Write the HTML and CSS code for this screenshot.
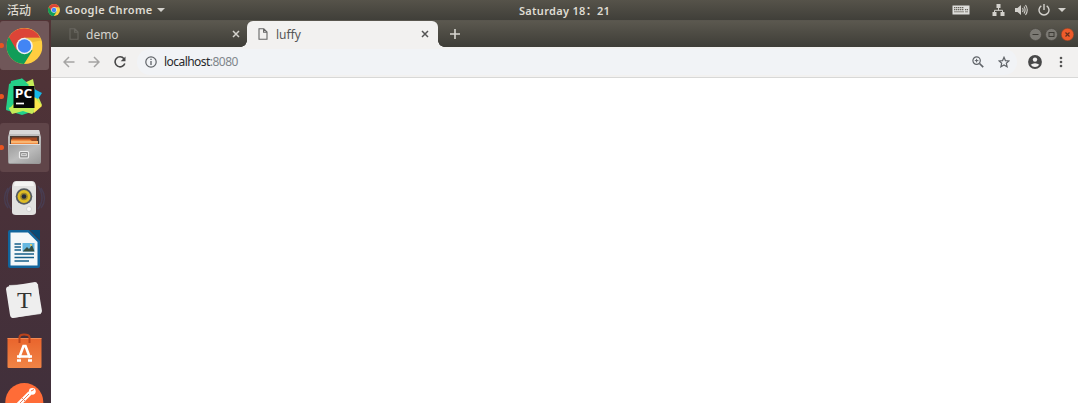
FILE: index.html
```html
<!DOCTYPE html>
<html lang="zh">
<head>
<meta charset="utf-8">
<title>luffy</title>
<link rel="stylesheet" href="styles.css">
</head>
<body>
<svg width="0" height="0" class="defs">
  <defs>
    <symbol id="chrome" viewBox="0 0 36 36">
      <circle cx="18" cy="18" r="18" fill="#ffcd40"/>
      <path d="M18 18 2.4 9A18 18 0 0 0 17.5 36L26 22.5Z" fill="#109d58"/>
      <path d="M2.4 9A18 18 0 0 1 33.6 9.8H18L10 22Z" fill="#dc4437"/>
      <circle cx="18" cy="18" r="8.3" fill="#f1f1f1"/>
      <circle cx="18" cy="18" r="6.7" fill="#4285f4"/>
    </symbol>
    <symbol id="page" viewBox="0 0 10 12">
      <path d="M1 .8H5.8L9 4V11.2H1ZM5.6 1V4.3H9" fill="none" stroke="currentColor" stroke-width="1.1"/>
    </symbol>
    <symbol id="close" viewBox="0 0 8 8">
      <path d="M1 1 7 7M7 1 1 7" stroke="currentColor" stroke-width="1.5"/>
    </symbol>
    <linearGradient id="steel" x1="0" y1="0" x2="0" y2="1"><stop offset="0" stop-color="#c4c4c4"/><stop offset="1" stop-color="#999"/></linearGradient>
    <linearGradient id="front" x1="0" y1="0" x2="1" y2="1"><stop offset="0" stop-color="#9c9c9c"/><stop offset=".5" stop-color="#bcbcbc"/><stop offset="1" stop-color="#9a9a9a"/></linearGradient>
    <linearGradient id="bag" x1="0" y1="0" x2="0" y2="1"><stop offset="0" stop-color="#e9642c"/><stop offset="1" stop-color="#f08446"/></linearGradient>
  </defs>
</svg>

<header class="topbar">
  <span class="activities">活动</span>
  <svg class="app-icon" width="12" height="12"><use href="#chrome"/></svg>
  <span class="app-name">Google Chrome</span>
  <svg class="caret" width="8" height="4"><path d="M0 0H8L4 4Z" fill="#d3d1cc"/></svg>
  <span class="clock">Saturday 18<span class="colon">：</span>21</span>
  <div class="tray">
    <svg class="keyboard" width="18" height="10" viewBox="0 0 18 10"><rect x=".5" y=".5" width="17" height="9" fill="#dededb"/><path d="M2 2.7H12M2 4.7H12M13 4.7H16" stroke="#66635c" stroke-width="1.2" stroke-dasharray="1.4 .6"/><path d="M2 6.8H12M13 6.8H16" stroke="#85827b"/></svg>
    <svg class="network" width="13" height="12" viewBox="0 0 13 12"><path d="M4.5 0H8.5V4H4.5ZM.5 8H4.5V12H.5ZM8.5 8H12.5V12H8.5Z" fill="#d3d1cc"/><path d="M6.5 4V6.3M2.5 8V6.3H10.500V8" fill="none" stroke="#d3d1cc"/></svg>
    <svg class="volume" width="13" height="12" viewBox="0 0 13 12"><path d="M0 4H2.5L6 1V11L2.5 8H0Z" fill="#d3d1cc"/><path d="M7.5 4Q8.8 6 7.5 8M9 2.5Q11.2 6 9 9.5M10.5 1Q14 6 10.5 11" fill="none" stroke="#d3d1cc" stroke-width="1.1"/></svg>
    <svg class="power" width="12" height="12" viewBox="0 0 12 12"><path d="M3.3 1.8A5 5 0 1 0 8.7 1.8M6 0V6" fill="none" stroke="#d3d1cc" stroke-width="1.4"/></svg>
    <svg width="8" height="4"><path d="M0 0H8L4 4Z" fill="#d3d1cc"/></svg>
  </div>
</header>

<div class="desktop">
  <nav class="dock">
    <div class="tile active running"><svg viewBox="0 0 49 49"><use href="#chrome" x="6.500" y="7" width="36" height="36"/><path d="M24.500 16.800H40L41 19.500L33 21Z" fill="#d9a52b" opacity=".45"/></svg></div>
    <div class="tile running"><svg viewBox="0 0 49 49">
      <path d="M11 9 22 6.500 35 17 34 39 22 43 6 38 9 23Z" fill="#20d18b"/>
      <path d="M24 11 33 7 35 17 42 33 32 42 23 39 12 42 7 33 25 22Z" fill="#c5ec58"/>
      <path d="M9 12 22 6.500 29 13 25 17 11 35 6 37Z" fill="#25cf87"/>
      <path d="M34 17 42 21 38 27 34 25Z" fill="#16b9e8"/><path d="M34 25 42 34 34 41Z" fill="#fbe84d"/>
      <rect x="13.500" y="14" width="21" height="22" fill="#080808"/>
      <text x="14.800" y="25.500" class="pc" textLength="17.500" lengthAdjust="spacingAndGlyphs">PC</text><path d="M16 31.500H24" stroke="#fff" stroke-width="1.700"/>
    </svg></div>
    <div class="tile open running"><svg viewBox="0 0 49 49">
      <path d="M10 7H39L41 14V39Q41 41 39 41H10Q8 41 8 39V14Z" fill="url(#steel)"/>
      <path d="M10 7H39L40 11H9Z" fill="#d8d8d8"/><rect x="10" y="13" width="29" height="9" fill="#4a3d35"/>
      <path d="M12 14.500H37V23H12Z" fill="#a34820"/><path d="M11 16.500H30L32 18H38V21H11Z" fill="#f18b41"/><path d="M11 19H38" stroke="#ffe0a5"/>
      <path d="M9 21H40V40H9Z" fill="url(#front)"/><path d="M9 21.500H40" stroke="#dedede"/>
      <rect x="19.500" y="28.500" width="9" height="6.500" rx="1" fill="#8c8c8c" stroke="#eee" stroke-width="1.200"/><rect x="21.700" y="30.700" width="4.600" height="2" fill="#999" stroke="#eee" stroke-width=".8"/>
    </svg></div>
    <div class="tile"><svg viewBox="0 0 49 49">
      <path d="M11 12Q3 24 11 35M8 14Q1 25 8 34M38 12Q46 24 38 35M41 14Q48 25 41 34" fill="none" stroke="#45547e" stroke-width="1.500" opacity=".35"/>
      <path d="M16 7H32Q36 7 36 14V38Q36 41 32 41H16Q12 41 12 38V14Q12 7 16 7Z" fill="#e2e2e0"/><path d="M15 8H33L34 12H14Z" fill="#f4f4f2"/>
      <circle cx="24" cy="22.500" r="8.300" fill="#555b60"/><circle cx="24" cy="22.500" r="6.500" fill="#dfbd25"/><circle cx="24" cy="22.500" r="3.800" fill="#9b852c"/><circle cx="24" cy="22.500" r="2.300" fill="#222b3e"/>
      <circle cx="29" cy="35" r="2.500" fill="#f7f7f7" stroke="#c5c5c5" stroke-width=".7"/>
    </svg></div>
    <div class="tile"><svg viewBox="0 0 49 49">
      <path d="M10 5H29L40 16V41Q40 43 38 43H10Q8 43 8 41V7Q8 5 10 5Z" fill="#11659c"/><path d="M10.500 7.500H28L37.500 17V40.500H10.500Z" fill="#f4f8f9"/><path d="M30 5H40V15Z" fill="#064b78"/>
      <path d="M14.500 19H21M14.500 22H21M14.500 25H21M14.500 29H34M14.500 32.500H34M14.500 36H29" stroke="#155f89" stroke-width="1.600"/>
      <rect x="22.500" y="18" width="12" height="8.500" fill="#65b8e1"/><path d="M23 26 27 22 29 24 32 20 34.500 26.500H23Z" fill="#374f42"/><circle cx="31" cy="20" r="1.100" fill="#f6cf55"/>
    </svg></div>
    <div class="tile"><svg viewBox="0 0 49 49">
      <path d="M9 9 38 8 41 38 12 42Z" fill="#cbcbcb"/><path d="M8 10.500 35 6Q37 6 37.500 8L42 35Q42 37 40 37.500L13 42Q10.500 42 10 39L6 13Q6 11 8 10.500Z" fill="#eee"/>
      <text x="24.300" y="31.500" class="typora">T</text>
    </svg></div>
    <div class="tile"><svg viewBox="0 0 49 49">
      <rect x="7.500" y="11" width="34" height="30" rx="1" fill="url(#bag)"/><path d="M7.500 11.500H41.500" stroke="#f28a54"/>
      <path d="M19.500 16V10Q20 7.500 24 7.500Q29 7.500 29.500 10V16" fill="none" stroke="#b9431c" stroke-width="2"/>
      <path d="M19 31 23.500 19H25.500L30 31M17 29.500H32" fill="none" stroke="#fff" stroke-width="2.600"/><path d="M17 33.500H21M28 33.500H32" stroke="#fff" stroke-width="2.300"/>
    </svg></div>
    <div class="tile"><svg viewBox="0 0 49 49"><circle cx="24.300" cy="24" r="19" fill="#ff6c37"/><path d="M16 29 30 15" stroke="#fff" stroke-width="4.500"/><path d="M17 28 29 16M22 20 26 24" stroke="#e98260"/><circle cx="32.300" cy="13.300" r="3.400" fill="#fff"/><path d="M31 13 34 11.500" stroke="#ff6c37"/></svg></div>
  </nav>

  <main class="browser">
    <div class="tabs">
      <div class="tab"><svg class="doc" width="10" height="12"><use href="#page"/></svg><span class="tab-title">demo</span><svg class="x" width="8" height="8"><use href="#close"/></svg></div>
      <div class="tab selected"><svg class="doc" width="10" height="12"><use href="#page"/></svg><span class="tab-title">luffy</span><svg class="x" width="8" height="8"><use href="#close"/></svg></div>
      <svg class="new-tab" width="10" height="10" viewBox="0 0 10 10"><path d="M5 0V10M0 5H10" stroke="#d8d6d0" stroke-width="1.600"/></svg>
      <div class="controls">
        <svg width="13" height="13" viewBox="0 0 13 13"><circle cx="6.500" cy="6.500" r="6" fill="#7c7a74" stroke="#4a4842" stroke-width=".7"/><path d="M3.500 6.500H9.500" stroke="#3c3a35"/></svg>
        <svg width="13" height="13" viewBox="0 0 13 13"><circle cx="6.500" cy="6.500" r="6" fill="#7c7a74" stroke="#4a4842" stroke-width=".7"/><rect x="4" y="4.500" width="5" height="4" fill="none" stroke="#3c3a35"/></svg>
        <svg width="13" height="13" viewBox="0 0 13 13"><circle cx="6.500" cy="6.500" r="6.200" fill="#ed5b2b" stroke="#8a4025" stroke-width=".5"/><path d="M4.500 4.500 8.500 8.500M8.500 4.500 4.500 8.500" stroke="#61301e" stroke-width="1.200"/></svg>
      </div>
    </div>
    <div class="toolbar">
      <svg class="back" width="12" height="12" viewBox="0 0 12 12"><path d="M11.500 6H1.500M6 1 1 6 6 11" fill="none" stroke="#a5a4a3" stroke-width="1.500"/></svg>
      <svg class="forward" width="12" height="12" viewBox="0 0 12 12"><path d="M.5 6H10.500M6 1 11 6 6 11" fill="none" stroke="#a5a4a3" stroke-width="1.500"/></svg>
      <svg class="reload" width="12" height="12" viewBox="0 0 12 12"><path d="M10 2.700A5 5 0 1 0 10.800 7.500" fill="none" stroke="#484848" stroke-width="1.600"/><path d="M11.500 .5V5.300H6.700Z" fill="#484848"/></svg>
      <div class="omnibox">
        <svg width="12" height="12" viewBox="0 0 12 12"><circle cx="6" cy="6" r="5.200" fill="none" stroke="#5f6368" stroke-width="1.200"/><path d="M6 5V9M6 2.800V4" stroke="#5f6368" stroke-width="1.300"/></svg>
        <span class="url">localhost<span class="port">:8080</span></span>
        <svg class="zoom" width="12" height="12" viewBox="0 0 12 12"><circle cx="4.600" cy="4.600" r="3.700" fill="none" stroke="#5f6368" stroke-width="1.200"/><path d="M7.500 7.500 11.200 11.200" stroke="#5f6368" stroke-width="1.700"/><path d="M2.800 4.600H6.400M4.600 2.800V6.400" stroke="#5f6368"/></svg>
        <svg class="star" width="12" height="12" viewBox="0 0 12 12"><path d="M6 1.300 7.400 4.600 11 4.900 8.300 7.200 9.100 10.700 6 8.900 2.900 10.700 3.700 7.200 1 4.900 4.600 4.600Z" fill="none" stroke="#5f6368" stroke-width="1.200"/></svg>
      </div>
      <svg class="profile" width="14" height="14" viewBox="0 0 14 14"><circle cx="7" cy="7" r="6.900" fill="#484848"/><circle cx="7" cy="4.600" r="2.200" fill="#f2f1f0"/><path d="M2.700 9.800Q4.500 8.200 7 8.200Q9.500 8.200 11.300 9.800Q9.600 12 7 12Q4.400 12 2.700 9.800Z" fill="#f2f1f0"/></svg>
      <svg class="menu" width="4" height="12" viewBox="0 0 4 12"><circle cx="2" cy="2" r="1.300" fill="#555"/><circle cx="2" cy="6" r="1.300" fill="#555"/><circle cx="2" cy="10" r="1.300" fill="#555"/></svg>
    </div>
    <div class="content"></div>
  </main>
</div>
</body>
</html>
```
FILE: styles.css
```css
* { box-sizing: border-box; }
body { margin: 0; width: 1078px; height: 403px; overflow: hidden; display: flex; flex-direction: column; font-family: "Noto Sans", "Noto Sans CJK SC", sans-serif; }
svg { display: block; flex: none; }
.defs { position: absolute; }
.topbar { height: 20px; flex: none; display: flex; align-items: center; background: linear-gradient(#56534a, #403f39); color: #dfdbd2; font-size: 11px; font-weight: 600; line-height: 20px; white-space: nowrap; }
.activities { width: 24px; margin-left: 7px; font: 500 12px/20px "Noto Sans CJK SC", sans-serif; }
.app-icon { margin-left: 17px; }
.app-name { width: 88px; margin-left: 5px; letter-spacing: .34px; }
.caret { margin-left: 4px; }
.clock { width: 94px; margin-left: 354px; padding-top: 2px; letter-spacing: .3px; }
.colon { font-family: "Noto Sans CJK TC", sans-serif; line-height: 1; }
.tray { margin-left: auto; padding-right: 12px; display: flex; align-items: center; }
.keyboard { margin-top: -1px; }
.network { margin-left: 22px; }
.volume { margin-left: 10px; }
.power { margin: 0 8px 0 10px; }
.desktop { flex: 1; min-height: 0; display: flex; }
.dock { width: 51px; flex: none; padding-top: 1px; display: flex; flex-direction: column; gap: 2px; overflow: hidden; background: linear-gradient(#523436, #493139 50%, #41303b); }
.tile { position: relative; width: 49px; height: 49px; flex: none; border-radius: 3px; }
.tile > svg { width: 49px; height: 49px; }
.active { background: #705759; }
.open { background: #604549; }
.running::before { content: ""; position: absolute; left: -1px; top: 22px; width: 5px; height: 5px; border-radius: 50%; background: #e95420; }
.pc { font: 700 12.5px "Open Sans", sans-serif; fill: #fff; }
.typora { font: 24px "Liberation Serif", serif; fill: #333; text-anchor: middle; }
.browser { flex: 1; min-width: 0; display: flex; flex-direction: column; background: #fff; }
.tabs { height: 27px; display: flex; align-items: center; border-top: 1px solid #59564e; background: linear-gradient(#5b584f, #3e3d37); }
.tab { width: 196px; height: 26px; display: flex; align-items: center; padding: 0 7px 0 18px; font-size: 12px; color: #d4d2cc; }
.tab .doc { color: #68665f; }
.tab-title { margin-left: 7px; }
.x { margin-left: auto; }
.selected { position: relative; width: 191px; padding: 0 9px 0 11px; border-radius: 6px 6px 0 0; background: #f2f1f0; color: #555; }
.selected::before, .selected::after { content: ""; position: absolute; bottom: 0; width: 6px; height: 6px; }
.selected::before { left: -6px; background: radial-gradient(circle at 0 0, transparent 5.500px, #f2f1f0 6px); }
.selected::after { right: -6px; background: radial-gradient(circle at 100% 0, transparent 5.500px, #f2f1f0 6px); }
.selected .doc { color: #666; }
.selected .tab-title { margin-left: 8px; }
.new-tab { margin-left: 12px; }
.controls { display: flex; gap: 3px; margin-left: auto; padding-right: 4px; }
.toolbar { height: 31px; display: flex; align-items: center; padding: 0 15px 1px 12px; background: #f2f1f0; border-bottom: 1px solid #d8d8d7; }
.forward { margin-left: 13px; }
.reload { margin-left: 14px; }
.omnibox { flex: 1; height: 26px; display: flex; align-items: center; margin: 0 11px 0 11px; padding: 0 7px 0 8px; border-radius: 13px; background: #f1f3f6; }
.url { margin-left: 7px; font-size: 12px; letter-spacing: -.54px; color: #28292b; }
.port { color: #80868b; }
.zoom { margin-left: auto; }
.star { margin-left: 14px; }
.menu { margin-left: 17px; }
.content { flex: 1; background: #fff; }
```
